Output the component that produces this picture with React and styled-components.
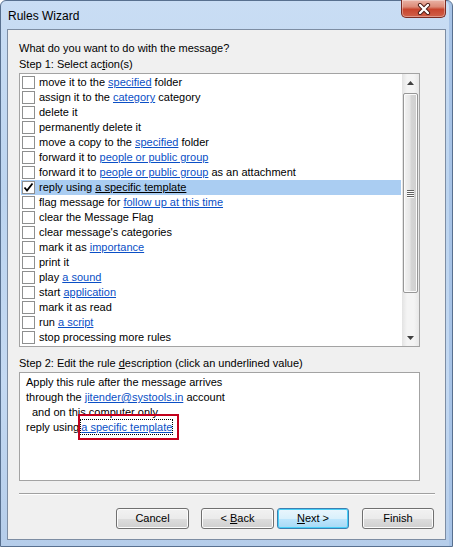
import React from "react";
import styled, { createGlobalStyle } from "styled-components";

const GlobalStyle = createGlobalStyle`
  html, body { margin: 0; padding: 0; }
  body {
    width: 453px;
    height: 547px;
    overflow: hidden;
    background: #ffffff;
    font-family: "Liberation Sans", Arial, sans-serif;
    font-size: 11px;
    color: #000;
  }
`;

const Window = styled.div`
  width: 453px;
  height: 547px;
  box-sizing: border-box;
  display: flex;
  flex-direction: column;
  background: linear-gradient(to bottom, #c9ddf4 0%, #bcd4ef 35%, #c4d9f2 70%, #b5cdea 100%);
  border: 1px solid #58708f;
  border-radius: 6px 6px 0 0;
  padding: 0 6px 6px 6px;
  box-shadow: inset -3px 0 0 #a7c3e6;
`;

const TitleBar = styled.div`
  height: 28px;
  display: flex;
  align-items: flex-start;
  justify-content: space-between;
`;

const Title = styled.div`
  padding: 7px 0 0 1px;
  font-size: 12px;
  line-height: 16px;
`;

const CloseButton = styled.div`
  width: 45px;
  height: 18px;
  margin-top: -1px;
  box-sizing: border-box;
  border: 1px solid #7b2b22;
  border-top: none;
  border-radius: 0 0 5px 5px;
  background: linear-gradient(to bottom, #eab3a6 0%, #dc8b78 40%, #c8452e 55%, #d0604a 100%);
  box-shadow: inset 0 0 0 1px rgba(255, 255, 255, 0.35);
  display: flex;
  align-items: center;
  justify-content: center;
`;

const Client = styled.div`
  flex: 1;
  background: #f0f0f0;
  border: 1px solid #7d8da3;
  padding: 0 10px 0 11px;
  display: flex;
  flex-direction: column;
`;

const Heading = styled.div`
  line-height: 16px;
  margin-top: ${(p) => p.$top || 0}px;
  white-space: nowrap;
`;

const ListBox = styled.div`
  margin-top: 1px;
  width: 401px;
  height: 274px;
  box-sizing: border-box;
  border: 1px solid #a3a3a3;
  background: #fff;
  display: flex;
`;

const Rows = styled.div`
  flex: 1;
  padding: 1px 1px 0 1px;
`;

const Row = styled.div`
  height: 15px;
  display: flex;
  align-items: center;
  background: ${(p) => (p.$selected ? "#aacdf2" : "transparent")};
  white-space: nowrap;
  line-height: 15px;
`;

const Check = styled.span`
  width: 13px;
  height: 13px;
  box-sizing: border-box;
  margin: 0 4px 0 1px;
  border: 1px solid #8e8f8f;
  background: #fff;
  display: flex;
  align-items: center;
  justify-content: center;
  flex-shrink: 0;
`;

const Link = styled.span`
  color: ${(p) => (p.$dark ? "#000" : "#0a4fc6")};
  text-decoration: underline;
`;

const ScrollBar = styled.div`
  width: 17px;
  display: flex;
  flex-direction: column;
  background: linear-gradient(to right, #e3e3e3, #f4f4f4 30%, #f4f4f4 70%, #e8e8e8);
`;

const ArrowBtn = styled.div`
  height: 17px;
  display: flex;
  align-items: center;
  justify-content: center;
`;

const Track = styled.div`
  flex: 1;
  display: flex;
  flex-direction: column;
  padding: 2px 1px 0 1px;
`;

const Thumb = styled.div`
  height: 200px;
  box-sizing: border-box;
  border: 1px solid #979797;
  border-radius: 2px;
  background: linear-gradient(to right, #f3f3f3, #e6e6e6 45%, #d5d5d5 55%, #cfcfcf);
  box-shadow: inset 0 0 0 1px #fbfbfb;
  display: flex;
  align-items: center;
  justify-content: center;
`;

const Grip = styled.div`
  width: 7px;
  display: flex;
  flex-direction: column;
  gap: 1px;
  & > span {
    height: 1px;
    background: #606060;
    box-shadow: 0 1px 0 #fff;
  }
`;

const DescBox = styled.div`
  margin-top: 1px;
  width: 401px;
  height: 109px;
  box-sizing: border-box;
  border: 1px solid #a3a3a3;
  background: #fff;
  padding: 2px 0 0 6px;
`;

const DescLine = styled.div`
  line-height: 15px;
  white-space: nowrap;
  padding-left: ${(p) => p.$indent || 0}px;
`;

const FocusLink = styled.span`
  position: relative;
  display: inline-block;
  line-height: 14px;
  margin-left: 2px;
  color: #0a4fc6;
  text-decoration: underline;
  outline: 1px dotted #000;

  &::after {
    content: "";
    position: absolute;
    left: -3px;
    right: -7px;
    top: -6px;
    bottom: -6px;
    border: 2px solid #c3001c;
  }
`;

const Separator = styled.div`
  margin-top: 12px;
  height: 1px;
  background: #a0a0a0;
  box-shadow: 0 1px 0 #fff;
`;

const ButtonRow = styled.div`
  margin-top: 14px;
  display: flex;
  justify-content: flex-end;
  padding-right: 1px;
`;

const Button = styled.div`
  width: ${(p) => p.$w || 73}px;
  height: 21px;
  box-sizing: border-box;
  margin-left: ${(p) => p.$gap || 0}px;
  border: 1px solid ${(p) => (p.$default ? "#3c7fb1" : "#707070")};
  border-radius: 3px;
  background: ${(p) =>
    p.$default
      ? "linear-gradient(to bottom, #eaf6fd 0%, #d9f0fc 50%, #bee6fd 51%, #a7d9f5 100%)"
      : "linear-gradient(to bottom, #f2f2f2 0%, #ebebeb 50%, #dddddd 51%, #cfcfcf 100%)"};
  box-shadow: inset 0 0 0 1px ${(p) => (p.$default ? "#48d0f8" : "#fcfcfc")};
  display: flex;
  align-items: center;
  justify-content: center;
  line-height: 15px;
  white-space: pre;
`;

const U = styled.span`
  text-decoration: underline;
`;

const actions = [
  ["move it to the ", "specified", " folder"],
  ["assign it to the ", "category", " category"],
  ["delete it"],
  ["permanently delete it"],
  ["move a copy to the ", "specified", " folder"],
  ["forward it to ", "people or public group", ""],
  ["forward it to ", "people or public group", " as an attachment"],
  ["reply using ", "a specific template", "", true],
  ["flag message for ", "follow up at this time", ""],
  ["clear the Message Flag"],
  ["clear message's categories"],
  ["mark it as ", "importance", ""],
  ["print it"],
  ["play ", "a sound", ""],
  ["start ", "application", ""],
  ["mark it as read"],
  ["run ", "a script", ""],
  ["stop processing more rules"],
];

const CheckMark = () => (
  <svg width="11" height="11" viewBox="0 0 11 11">
    <path d="M1.5 5.5 L4 8.5 L9.5 1.5" fill="none" stroke="#000" strokeWidth="1.8" />
  </svg>
);

const CloseX = () => (
  <svg width="16" height="12" viewBox="0 0 16 12">
    <path d="M4 2 L12 10 M12 2 L4 10" stroke="#4a1a14" strokeWidth="4.2" strokeLinecap="round" />
    <path d="M4 2 L12 10 M12 2 L4 10" stroke="#ffffff" strokeWidth="2.4" strokeLinecap="round" />
  </svg>
);

const Arrow = ({ down }) => (
  <svg width="7" height="4" viewBox="0 0 7 4">
    <path d={down ? "M0 0 H7 L3.5 4 Z" : "M0 4 H7 L3.5 0 Z"} fill="#404040" />
  </svg>
);

export default function App() {
  return (
    <>
      <GlobalStyle />
      <Window>
        <TitleBar>
          <Title>Rules Wizard</Title>
          <CloseButton>
            <CloseX />
          </CloseButton>
        </TitleBar>
        <Client>
          <Heading $top={10}>What do you want to do with the message?</Heading>
          <Heading>
            Step 1: Select ac<U>t</U>ion(s)
          </Heading>
          <ListBox>
            <Rows>
              {actions.map(([pre, link, post, sel], i) => (
                <Row key={i} $selected={sel}>
                  <Check>{sel && <CheckMark />}</Check>
                  <span style={{ whiteSpace: "pre" }}>
                    {pre}
                    {link && <Link $dark={sel}>{link}</Link>}
                    {post}
                  </span>
                </Row>
              ))}
            </Rows>
            <ScrollBar>
              <ArrowBtn>
                <Arrow />
              </ArrowBtn>
              <Track>
                <Thumb>
                  <Grip>
                    <span />
                    <span />
                    <span />
                    <span />
                  </Grip>
                </Thumb>
              </Track>
              <ArrowBtn>
                <Arrow down />
              </ArrowBtn>
            </ScrollBar>
          </ListBox>
          <Heading $top={8}>
            Step 2: Edit the rule <U>d</U>escription (click an underlined value)
          </Heading>
          <DescBox>
            <DescLine>Apply this rule after the message arrives</DescLine>
            <DescLine>
              through the <Link>jitender@systools.in</Link> account
            </DescLine>
            <DescLine $indent={6}>and on this computer only</DescLine>
            <DescLine>
              reply using<FocusLink>a specific template</FocusLink>
            </DescLine>
          </DescBox>
          <Separator />
          <ButtonRow>
            <Button>Cancel</Button>
            <Button $gap={12}>
              {"< "}
              <U>B</U>ack
            </Button>
            <Button $gap={3} $w={72} $default>
              <U>N</U>
              {"ext >"}
            </Button>
            <Button $gap={13} $w={72}>
              Finish
            </Button>
          </ButtonRow>
        </Client>
      </Window>
    </>
  );
}
